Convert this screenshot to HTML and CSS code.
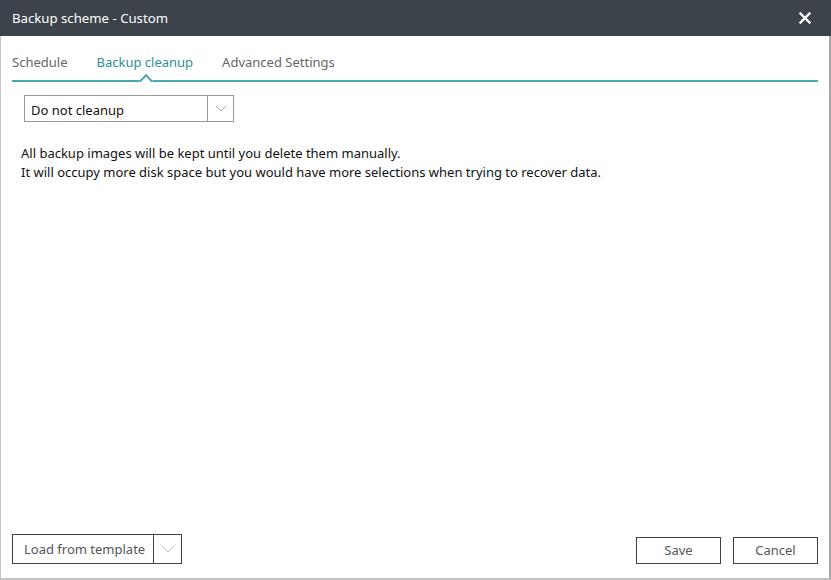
FILE: index.html
```html
<!DOCTYPE html>
<html>
<head>
<meta charset="utf-8">
<link rel="stylesheet" href="styles.css">
</head>
<body>
<div class="window">
  <div class="titlebar">
    <span class="title">Backup scheme - Custom</span>
    <svg class="close" width="12" height="12" viewBox="0 0 12 12"><path d="M1.5 1.5 L10.5 10.5 M10.5 1.5 L1.5 10.5" stroke="#fff" stroke-width="2.4" stroke-linecap="square"/></svg>
  </div>
  <div class="content">
    <div class="tabs">
      <span class="tab">Schedule</span>
      <span class="tab active">Backup cleanup</span>
      <span class="tab">Advanced Settings</span>
    </div>
    <div class="panel">
      <div class="select">
        <span class="select-text">Do not cleanup</span>
        <span class="select-arrow"><svg width="12" height="7" viewBox="0 0 12 7"><path d="M1 1 L6 6 L11 1" fill="none" stroke="#aaa" stroke-width="1"/></svg></span>
      </div>
      <p class="desc">All backup images will be kept until you delete them manually.<br>It will occupy more disk space but you would have more selections when trying to recover data.</p>
    </div>
    <div class="footer">
      <div class="split">
        <span class="split-text">Load from template</span>
        <span class="split-arrow"><svg width="14" height="8" viewBox="0 0 14 8"><path d="M1 1 L7 7 L13 1" fill="none" stroke="#bbb" stroke-width="1"/></svg></span>
      </div>
      <div class="actions">
        <button class="btn">Save</button>
        <button class="btn">Cancel</button>
      </div>
    </div>
  </div>
</div>
</body>
</html>
```
FILE: styles.css
```css
* { box-sizing: border-box; }
html, body { margin: 0; padding: 0; background: #fff; }
body { font-family: "Noto Sans", "Open Sans", sans-serif; font-size: 12px; color: #222; }
.window { width: 831px; height: 580px; display: flex; flex-direction: column; }
.titlebar {
  height: 36px; flex: none; background: #3c434a; color: #fff;
  display: flex; align-items: center; justify-content: space-between;
  padding: 0 20px 0 12px;
}
.title { font-size: 13.2px; }
.close { display: block; }
.content {
  flex: 1; display: flex; flex-direction: column;
  border-left: 1px solid #c4c4c4; border-right: 2px solid #a8a8a8; border-bottom: 2px solid #c4c4c4;
  padding: 0 11px 14px 11px;
}
.tabs {
  height: 46px; display: flex; align-items: flex-end; gap: 29px;
  border-bottom: 2px solid #4aabaf; padding-bottom: 9px;
}
.tab { font-size: 13px; color: #666; position: relative; line-height: 18px; }
.tab.active { color: #2e8f93; }
.tab.active::after {
  content: ""; position: absolute; left: 50%; bottom: -15px;
  width: 8px; height: 8px; margin-left: -4px;
  background: #fff; border-top: 2px solid #4aabaf; border-left: 2px solid #4aabaf;
  transform: rotate(45deg);
}
.panel { flex: 1; padding: 13px 0 0 12px; }
.select {
  width: 210px; height: 27px; border: 1px solid #999; display: flex;
}
.select-text { flex: 1; padding: 3px 0 0 6px; line-height: 22px; font-size: 13px; color: #111; }
.select-arrow { width: 26px; border-left: 1px solid #999; display: flex; align-items: center; justify-content: center; }
.desc { margin: 22px 0 0 -3px; line-height: 19px; font-size: 13px; color: #111; }
.footer { display: flex; justify-content: space-between; align-items: flex-end; }
.split { width: 170px; height: 30px; border: 1px solid #3c434a; display: flex; }
.split-text { flex: 1; line-height: 28px; padding-left: 11px; font-size: 13px; color: #555; }
.split-arrow { width: 28px; border-left: 1px solid #3c434a; display: flex; align-items: center; justify-content: center; }
.actions { display: flex; gap: 12px; }
.btn {
  width: 85px; height: 27px; border: 1px solid #3c434a; background: #fff;
  font-family: inherit; font-size: 13px; color: #555; padding: 0 0 1px 0;
}
```
